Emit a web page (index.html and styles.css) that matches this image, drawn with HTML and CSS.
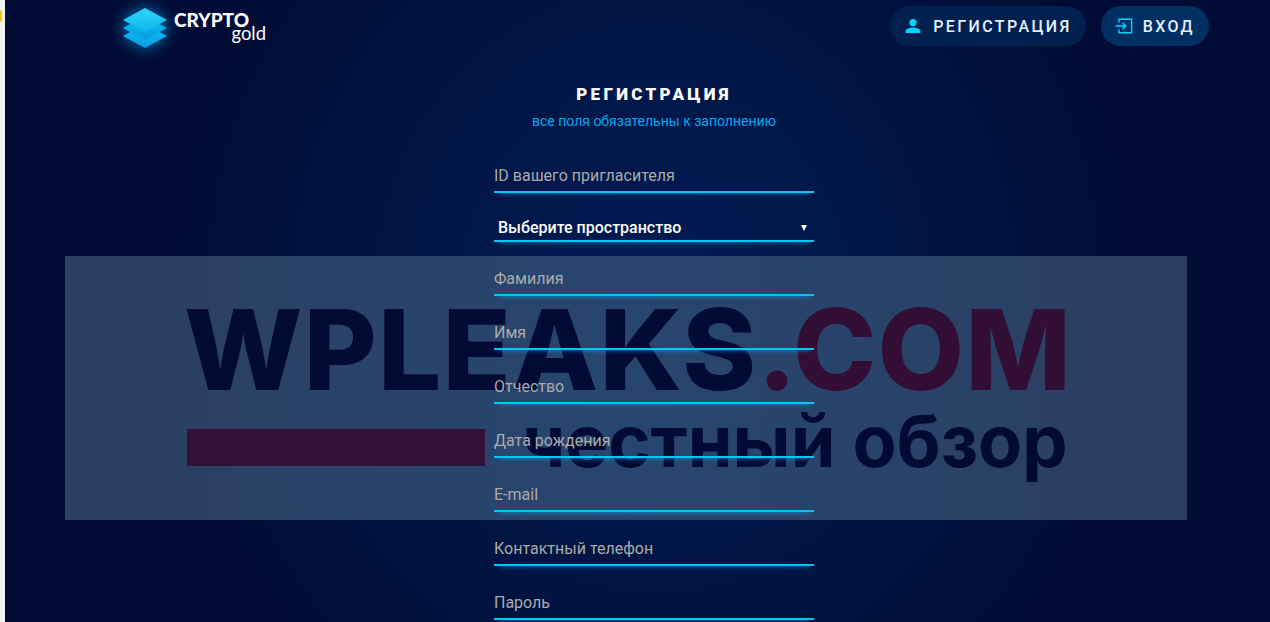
FILE: index.html
```html
<!DOCTYPE html>
<html lang="ru">
<head>
  <meta charset="UTF-8" />
  <meta name="viewport" content="width=device-width, initial-scale=1.0"/>
  <title>Crypto Gold</title>
  <link rel="stylesheet" href="styles.css">
</head>
<body>

  <div class="edge"><span class="edge-dot"></span></div>

  <div class="page">
    <!-- Watermark, sits under the form -->
    <div class="watermark">
      <div class="wm-top">WPLEAKS<span class="wm-red">.COM</span></div>
      <div class="wm-bottom">
        <span class="wm-bar"></span>
        <span class="wm-sub">честный обзор</span>
      </div>
    </div>

    <header class="topbar">
      <a class="logo" href="#">
        <svg class="logo-icon" viewBox="0 0 44 40" width="44" height="40">
          <defs>
            <linearGradient id="layerTop" x1="0" y1="0" x2="0" y2="1">
              <stop offset="0" stop-color="#2fd6f8"/>
              <stop offset="1" stop-color="#0cb6ec"/>
            </linearGradient>
            <linearGradient id="layerLow" x1="0" y1="0" x2="0" y2="1">
              <stop offset="0" stop-color="#0cc4f4"/>
              <stop offset="1" stop-color="#0a9ce2"/>
            </linearGradient>
          </defs>
          <path d="M22 16 L44 28 L22 40 L0 28 Z" fill="url(#layerLow)"/>
          <path d="M22 8 L44 20 L22 32 L0 20 Z" fill="#0aa6e6"/>
          <path d="M22 8.6 L43 20 L22 31 L1 20 Z" fill="url(#layerLow)"/>
          <path d="M22 0 L44 12 L22 24 L0 12 Z" fill="url(#layerTop)"/>
        </svg>
        <span class="logo-text">
          <span class="logo-crypto">CRYPTO</span>
          <span class="logo-gold">gold</span>
        </span>
      </a>
      <nav class="nav">
        <a class="nav-btn" href="#">
          <svg viewBox="0 0 16 16" width="16" height="16"><path fill="#00d4ff" d="M8 1a3.6 3.6 0 1 1 0 7.2A3.6 3.6 0 0 1 8 1zM.6 15v-1.7c0-2.4 4.9-3.7 7.4-3.7s7.4 1.3 7.4 3.7V15z"/></svg>
          <span>РЕГИСТРАЦИЯ</span>
        </a>
        <a class="nav-btn nav-btn-light" href="#">
          <svg viewBox="0 0 18 18" width="18" height="18" fill="none" stroke="#00d4ff" stroke-width="1.4"><path d="M4 5.5V2.2h12.6v13.6H4v-3.3"/><path d="M.5 9h10M7.6 5.8 10.8 9l-3.2 3.2"/></svg>
          <span>ВХОД</span>
        </a>
      </nav>
    </header>

    <main class="content">
      <h1 class="title">РЕГИСТРАЦИЯ</h1>
      <p class="subtitle">все поля обязательны к заполнению</p>

      <form class="form">
        <input class="field" type="text" placeholder="ID вашего пригласителя" />
        <div class="select-wrap">
          <select class="select">
            <option>Выберите пространство</option>
          </select>
        </div>
        <input class="field" type="text" placeholder="Фамилия" />
        <input class="field" type="text" placeholder="Имя" />
        <input class="field" type="text" placeholder="Отчество" />
        <input class="field" type="text" placeholder="Дата рождения" />
        <input class="field" type="email" placeholder="E-mail" />
        <input class="field" type="tel" placeholder="Контактный телефон" />
        <input class="field" type="password" placeholder="Пароль" />
      </form>
    </main>
  </div>

</body>
</html>
```

FILE: styles.css
```css
:root {
  --cyan: #00c8f0;
}

* {
  box-sizing: border-box;
  font-family: 'Roboto', sans-serif;
}

html, body {
  height: 100%;
}

body {
  margin: 0;
  display: flex;
  overflow: hidden;
  background: #f1f1f1;
}

.edge {
  width: 5px;
  flex-shrink: 0;
  padding-top: 10px;
}

.edge-dot {
  display: block;
  width: 2px;
  height: 12px;
  background: #f5c800;
  border-radius: 0 6px 6px 0;
}

.page {
  position: relative;
  flex: 1;
  overflow: hidden;
  background: radial-gradient(ellipse 480px 520px at 649px 290px, #001c54 0%, #001544 55%, #000c35 100%);
}

.topbar {
  position: relative;
  z-index: 1;
  display: flex;
  justify-content: space-between;
  padding: 6px 61px 0 118px;
}

.logo {
  display: flex;
  align-items: flex-start;
  gap: 7px;
  text-decoration: none;
  color: #fff;
}

.logo-icon {
  margin-top: 2px;
  overflow: visible;
  filter: drop-shadow(0 0 8px rgba(0, 170, 255, 0.75));
}

.logo-text {
  display: flex;
  flex-direction: column;
  align-items: flex-end;
  margin-top: 6px;
}

.logo-crypto {
  font-family: 'Lato', sans-serif;
  font-weight: 900;
  font-size: 19px;
  line-height: 16px;
}

.logo-gold {
  font-family: 'Lato', sans-serif;
  font-weight: 400;
  font-size: 18.5px;
  line-height: 16px;
  margin: -3px -17px 0 0;
}

.nav {
  display: flex;
  gap: 15px;
}

.nav-btn {
  display: flex;
  align-items: center;
  gap: 12px;
  height: 40px;
  padding: 0 14px 0 15px;
  border-radius: 20px;
  background: #00214f;
  color: #e6f0ff;
  font-size: 16px;
  font-weight: 500;
  letter-spacing: 2.4px;
  text-decoration: none;
}

.nav-btn-light {
  background: #002f63;
  gap: 10px;
  padding: 0 14px;
}

.content {
  position: relative;
  z-index: 1;
  display: flex;
  flex-direction: column;
  align-items: center;
  padding: 36px 0 0 33px;
}

.title {
  margin: 0;
  color: #fff;
  font-size: 17px;
  line-height: 20px;
  font-weight: 900;
  letter-spacing: 3.3px;
}

.subtitle {
  margin: 9px 0 0;
  color: #00a8f0;
  font-size: 14px;
  line-height: 16px;
}

.form {
  width: 320px;
  margin-top: 24px;
  display: flex;
  flex-direction: column;
}

.field {
  height: 40px;
  margin-bottom: 14px;
  padding: 6px 0 0;
  border: none;
  border-bottom: 2px solid var(--cyan);
  box-shadow: 0 5px 5px -5px rgba(0, 170, 255, 0.8);
  background: transparent;
  color: #fff;
  font-size: 16px;
  outline: none;
}

.field::placeholder {
  color: #ababab;
  opacity: 1;
}

.select-wrap {
  position: relative;
  margin-bottom: 14px;
  height: 35px;
}

.select-wrap::after {
  content: "";
  position: absolute;
  right: 7px;
  top: 18px;
  border-left: 3px solid transparent;
  border-right: 3px solid transparent;
  border-top: 6px solid #fff;
}

.select {
  width: 100%;
  height: 100%;
  padding: 7px 0 0 4px;
  appearance: none;
  border: none;
  border-bottom: 2px solid var(--cyan);
  border-radius: 0;
  box-shadow: 0 5px 5px -5px rgba(0, 170, 255, 0.8);
  background: transparent;
  color: #fff;
  font-size: 16px;
  font-weight: 500;
  outline: none;
}

.select option {
  color: #000;
}

/* Watermark band */
.watermark {
  position: absolute;
  left: 60px;
  top: 256px;
  width: 1122px;
  height: 264px;
  padding: 31px 0 0 122px;
  background: linear-gradient(90deg, #2b3f60 0%, #27466f 50%, #2b3f60 100%);
  color: #000a33;
}

.wm-top {
  margin-left: -3px;
  font-family: 'Inter', sans-serif;
  font-weight: 800;
  font-size: 112px;
  line-height: 124px;
  letter-spacing: 1.2px;
  white-space: nowrap;
}

.wm-red {
  font-family: inherit;
  color: #320e34;
}

.wm-bottom {
  display: flex;
  align-items: flex-start;
  gap: 37px;
}

.wm-bar {
  width: 298px;
  height: 37px;
  margin-top: 18px;
  background: #321038;
}

.wm-sub {
  margin-top: -7px;
  font-family: 'Inter', sans-serif;
  font-weight: 700;
  font-size: 72px;
  line-height: 74px;
  white-space: nowrap;
}
```
